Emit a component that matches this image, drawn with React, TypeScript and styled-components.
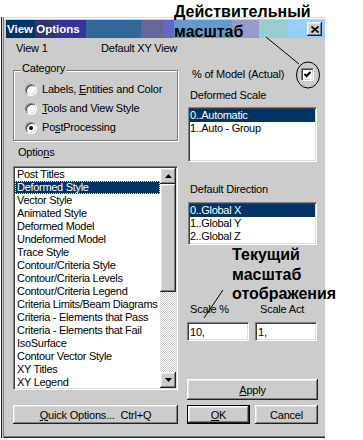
import React from "react";
import styled, { createGlobalStyle } from "styled-components";

const GlobalStyle = createGlobalStyle`
  html, body { margin: 0; padding: 0; background: #ffffff; }
  body { font-family: "Liberation Sans", Arial, sans-serif; }
`;

const raised = `
  box-shadow: inset -1px -1px 0 #222222, inset 1px 1px 0 #ffffff,
    inset -2px -2px 0 #808080, inset 2px 2px 0 #e4e4e4;
`;

const Page = styled.div`
  position: relative;
  width: 363px;
  height: 440px;
  overflow: hidden;
  background: #ffffff;
  padding-top: 17px;
  box-sizing: border-box;
`;

const Window = styled.div`
  margin-left: 1px;
  width: 324px;
  height: 421px;
  box-sizing: border-box;
  background: #cccccc;
  padding: 3px 0 0 5px;
  box-shadow: inset 1px 0 0 #222222, inset 2px 0 0 #cccccc, inset 3px 0 0 #808080,
    inset 0 -1px 0 #222222, inset 0 -2px 0 #808080, inset 0 1px 0 #d8d8d8, inset 0 2px 0 #ffffff;
  display: flex;
  flex-direction: column;
  font-family: "Liberation Sans", Arial, sans-serif;
  font-size: 11px;
  letter-spacing: -0.2px;
  color: #000000;
`;

const TitleBar = styled.div`
  height: 18px;
  display: flex;
  align-items: center;
  justify-content: space-between;
  padding: 0 3px 0 1px;
  background: linear-gradient(
    to right,
    #003366 0 29px,
    #333366 29px 49px,
    #333399 49px 80px,
    #336699 80px 135px,
    #666699 135px 157px,
    #6666cc 157px 168px,
    #6699cc 168px 226px,
    #9999cc 226px 253px,
    #99cccc 253px 282px,
    #99ccff 282px
  );
`;

const Title = styled.span`
  color: #ffffff;
  font-weight: bold;
  font-size: 11.5px;
  line-height: 18px;
  letter-spacing: 0;
`;

const CloseButton = styled.div`
  width: 15px;
  height: 14px;
  background: #cccccc;
  display: flex;
  align-items: center;
  justify-content: center;
  ${raised}
`;

const Body = styled.div`
  display: flex;
  flex-direction: column;
  padding: 4px 7px 0 7px;
`;

const HeaderRow = styled.div`
  display: grid;
  grid-template-columns: 85px auto;
  padding-left: 3px;
  height: 13px;
  line-height: 13px;
`;

const Columns = styled.div`
  display: grid;
  grid-template-columns: 165px 131px;
  column-gap: 9px;
  align-items: start;
`;

const Column = styled.div`
  display: flex;
  flex-direction: column;
`;

const GroupBox = styled.div`
  position: relative;
  margin-top: 15px;
  border: 1px solid #808080;
  box-shadow: inset 1px 1px 0 #ffffff, 1px 1px 0 #ffffff;
  padding: 9px 0 3px 11px;
  display: flex;
  flex-direction: column;
`;

const Legend = styled.span`
  position: absolute;
  top: -9px;
  left: 7px;
  padding: 0 1px;
  background: #cccccc;
  line-height: 13px;
`;

const RadioRow = styled.div`
  height: 19px;
  display: flex;
  align-items: center;
  gap: 5px;
  line-height: 13px;
`;

const Radio = styled.span<{ $checked?: boolean }>`
  position: relative;
  width: 12px;
  height: 12px;
  box-sizing: border-box;
  border-radius: 50%;
  border: 1px solid;
  border-color: #808080 #ffffff #ffffff #808080;
  background: #ffffff;
  box-shadow: inset 1px 1px 0 #404040, inset -1px -1px 0 #dcdcdc;
  flex: none;
  &::after {
    content: "";
    display: ${(p) => (p.$checked ? "block" : "none")};
    position: absolute;
    left: 3px;
    top: 3px;
    width: 4px;
    height: 4px;
    border-radius: 50%;
    background: #000000;
  }
`;

const Key = styled.u`
  text-decoration: underline;
  text-underline-offset: 1px;
`;

const FieldLabel = styled.div<{ $mt: number; $pl: number }>`
  margin-top: ${(p) => p.$mt}px;
  padding-left: ${(p) => p.$pl}px;
  line-height: 13px;
  height: 13px;
  white-space: nowrap;
`;

const ListBox = styled.div<{ $mt: number; $h: number; $mx?: number }>`
  margin: ${(p) => p.$mt}px ${(p) => p.$mx ?? 0}px 0;
  height: ${(p) => p.$h}px;
  box-sizing: border-box;
  border: 1px solid;
  border-color: #808080 #ffffff #ffffff #808080;
  box-shadow: inset 1px 1px 0 #404040, inset -1px -1px 0 #dcdcdc;
  padding: 1px;
  background: #ffffff;
  display: flex;
  overflow: hidden;
`;

const Items = styled.div`
  flex: 1;
  min-width: 0;
  overflow: hidden;
  background: #ffffff;
`;

const Item = styled.div<{ $selected?: boolean; $focus?: boolean; $pl: number }>`
  height: 13px;
  line-height: 13px;
  padding-left: ${(p) => p.$pl}px;
  white-space: nowrap;
  letter-spacing: -0.3px;
  background: ${(p) => (p.$selected ? "#003366" : "transparent")};
  color: ${(p) => (p.$selected ? "#ffffff" : "#000000")};
  outline: ${(p) => (p.$focus ? "1px dotted #ffe9a0" : "none")};
  outline-offset: -1px;
`;

const ScrollBar = styled.div`
  width: 16px;
  flex: none;
  display: flex;
  flex-direction: column;
`;

const ScrollButton = styled.div`
  width: 16px;
  height: 16px;
  background: #cccccc;
  display: flex;
  align-items: center;
  justify-content: center;
  ${raised}
`;

const Thumb = styled.div<{ $h: number }>`
  height: ${(p) => p.$h}px;
  background: #cccccc;
  ${raised}
`;

const Track = styled.div`
  flex: 1;
  background: repeating-conic-gradient(#ffffff 0 25%, #cccccc 0 50%) 0 0 / 2px 2px;
`;

const Button = styled.div<{ $mt?: number; $h: number; $default?: boolean }>`
  margin-top: ${(p) => p.$mt ?? 0}px;
  height: ${(p) => p.$h}px;
  box-sizing: border-box;
  background: #cccccc;
  display: flex;
  align-items: center;
  justify-content: center;
  white-space: nowrap;
  border: ${(p) => (p.$default ? "1px solid #000000" : "none")};
  ${raised}
`;

const CheckRow = styled.div`
  margin-top: 13px;
  height: 13px;
  display: flex;
  align-items: center;
  justify-content: space-between;
  padding: 0 4px 0 5px;
  line-height: 13px;
`;

const CheckBox = styled.span`
  width: 13px;
  height: 13px;
  box-sizing: border-box;
  border: 1px solid;
  border-color: #808080 #ffffff #ffffff #808080;
  box-shadow: inset 1px 1px 0 #404040, inset -1px -1px 0 #dcdcdc;
  background: #ffffff;
  display: flex;
  align-items: center;
  justify-content: center;
`;

const ScaleLabels = styled.div`
  margin-top: 58px;
  display: grid;
  grid-template-columns: 70px auto;
  padding-left: 3px;
  line-height: 13px;
  height: 13px;
`;

const InputRow = styled.div`
  margin-top: 6px;
  display: grid;
  grid-template-columns: 62px 62px;
  column-gap: 6px;
`;

const Field = styled.input`
  width: 62px;
  height: 19px;
  box-sizing: border-box;
  margin: 0;
  border: 1px solid;
  border-color: #808080 #ffffff #ffffff #808080;
  box-shadow: inset 1px 1px 0 #404040, inset -1px -1px 0 #dcdcdc;
  background: #ffffff;
  padding: 1px 2px 0;
  font-family: "Liberation Sans", Arial, sans-serif;
  font-size: 11px;
  letter-spacing: -0.2px;
  color: #000000;
  outline: none;
`;

const ButtonRow = styled.div`
  margin-top: 5px;
  display: grid;
  grid-template-columns: 63px 63px;
  column-gap: 5px;
`;

const Callout = styled.div<{ $top: number; $left: number; $lh: number }>`
  position: absolute;
  top: ${(p) => p.$top}px;
  left: ${(p) => p.$left}px;
  font-family: "Liberation Sans", Arial, sans-serif;
  font-weight: bold;
  font-size: 16px;
  line-height: ${(p) => p.$lh}px;
  color: #000000;
  white-space: nowrap;
  pointer-events: none;
`;

const Overlay = styled.svg`
  position: absolute;
  left: 0;
  top: 0;
  width: 363px;
  height: 440px;
  pointer-events: none;
`;

const Arrow = ({ up }: { up?: boolean }) => (
  <svg width="7" height="4" viewBox="0 0 7 4">
    <polygon points={up ? "3.5,0 7,4 0,4" : "0,0 7,0 3.5,4"} fill="#000" />
  </svg>
);

const options = [
  "Post Titles",
  "Deformed Style",
  "Vector Style",
  "Animated Style",
  "Deformed Model",
  "Undeformed Model",
  "Trace Style",
  "Contour/Criteria Style",
  "Contour/Criteria Levels",
  "Contour/Criteria Legend",
  "Criteria Limits/Beam Diagrams",
  "Criteria - Elements that Pass",
  "Criteria - Elements that Fail",
  "IsoSurface",
  "Contour Vector Style",
  "XY Titles",
  "XY Legend",
];

export default function App() {
  return (
    <>
      <GlobalStyle />
      <Page>
        <Window>
          <TitleBar>
            <Title>View Options</Title>
            <CloseButton>
              <svg width="8" height="7" viewBox="0 0 8 7">
                <path d="M0.5 0.5 L7.5 6.5 M7.5 0.5 L0.5 6.5" stroke="#000" strokeWidth="1.6" />
              </svg>
            </CloseButton>
          </TitleBar>
          <Body>
            <HeaderRow>
              <span>View 1</span>
              <span>Default XY View</span>
            </HeaderRow>
            <Columns>
              <Column>
                <GroupBox>
                  <Legend>Category</Legend>
                  <RadioRow>
                    <Radio />
                    <span>
                      Labels, <Key>E</Key>ntities and Color
                    </span>
                  </RadioRow>
                  <RadioRow>
                    <Radio />
                    <span>
                      <Key>T</Key>ools and View Style
                    </span>
                  </RadioRow>
                  <RadioRow>
                    <Radio $checked />
                    <span>
                      Po<Key>s</Key>tProcessing
                    </span>
                  </RadioRow>
                </GroupBox>
                <FieldLabel $mt={5} $pl={5}>
                  Optio<Key>n</Key>s
                </FieldLabel>
                <ListBox $mt={7} $h={224}>
                  <Items>
                    {options.map((o, i) => (
                      <Item key={o} $pl={2} $selected={i === 1} $focus={i === 1}>
                        {o}
                      </Item>
                    ))}
                  </Items>
                  <ScrollBar>
                    <ScrollButton>
                      <Arrow up />
                    </ScrollButton>
                    <Thumb $h={108} />
                    <Track />
                    <ScrollButton>
                      <Arrow />
                    </ScrollButton>
                  </ScrollBar>
                </ListBox>
                <Button $mt={15} $h={19}>
                  <span>
                    <Key>Q</Key>uick Options...&nbsp;&nbsp;Ctrl+Q
                  </span>
                </Button>
              </Column>
              <Column>
                <CheckRow>
                  <span>% of Model (Actual)</span>
                  <CheckBox>
                    <svg width="7" height="7" viewBox="0 0 7 7">
                      <path d="M0.5 3 L2.5 5 L6.5 1" stroke="#000" strokeWidth="2" fill="none" />
                    </svg>
                  </CheckBox>
                </CheckRow>
                <FieldLabel $mt={8} $pl={3}>
                  Deformed Scale
                </FieldLabel>
                <ListBox $mt={5} $h={55} $mx={1}>
                  <Items>
                    <Item $pl={0} $selected>
                      0..Automatic
                    </Item>
                    <Item $pl={0}>1..Auto - Group</Item>
                  </Items>
                </ListBox>
                <FieldLabel $mt={21} $pl={3}>
                  Default Direction
                </FieldLabel>
                <ListBox $mt={6} $h={43} $mx={1}>
                  <Items>
                    <Item $pl={0} $selected>
                      0..Global X
                    </Item>
                    <Item $pl={0}>1..Global Y</Item>
                    <Item $pl={0}>2..Global Z</Item>
                  </Items>
                </ListBox>
                <ScaleLabels>
                  <span>Scale %</span>
                  <span>Scale Act</span>
                </ScaleLabels>
                <InputRow>
                  <Field readOnly defaultValue="10," />
                  <Field readOnly defaultValue="1," />
                </InputRow>
                <Button $mt={38} $h={21}>
                  <span>
                    <Key>A</Key>pply
                  </span>
                </Button>
                <ButtonRow>
                  <Button $h={19} $default>
                    <span>
                      <Key>O</Key>K
                    </span>
                  </Button>
                  <Button $h={19}>
                    <span>Cancel</span>
                  </Button>
                </ButtonRow>
              </Column>
            </Columns>
          </Body>
        </Window>
        <Callout $top={2} $left={174} $lh={20}>
          Действительный
          <br />
          масштаб
        </Callout>
        <Callout $top={245} $left={232} $lh={19.5}>
          Текущий
          <br />
          масштаб
          <br />
          отображения
        </Callout>
        <Overlay viewBox="0 0 363 440">
          <line x1="266" y1="37" x2="299" y2="64" stroke="#000" strokeWidth="1" />
          <ellipse cx="308" cy="75" rx="11.5" ry="13" fill="none" stroke="#000" strokeWidth="1" />
          <line x1="223" y1="290" x2="204" y2="318" stroke="#000" strokeWidth="1" />
        </Overlay>
      </Page>
    </>
  );
}
